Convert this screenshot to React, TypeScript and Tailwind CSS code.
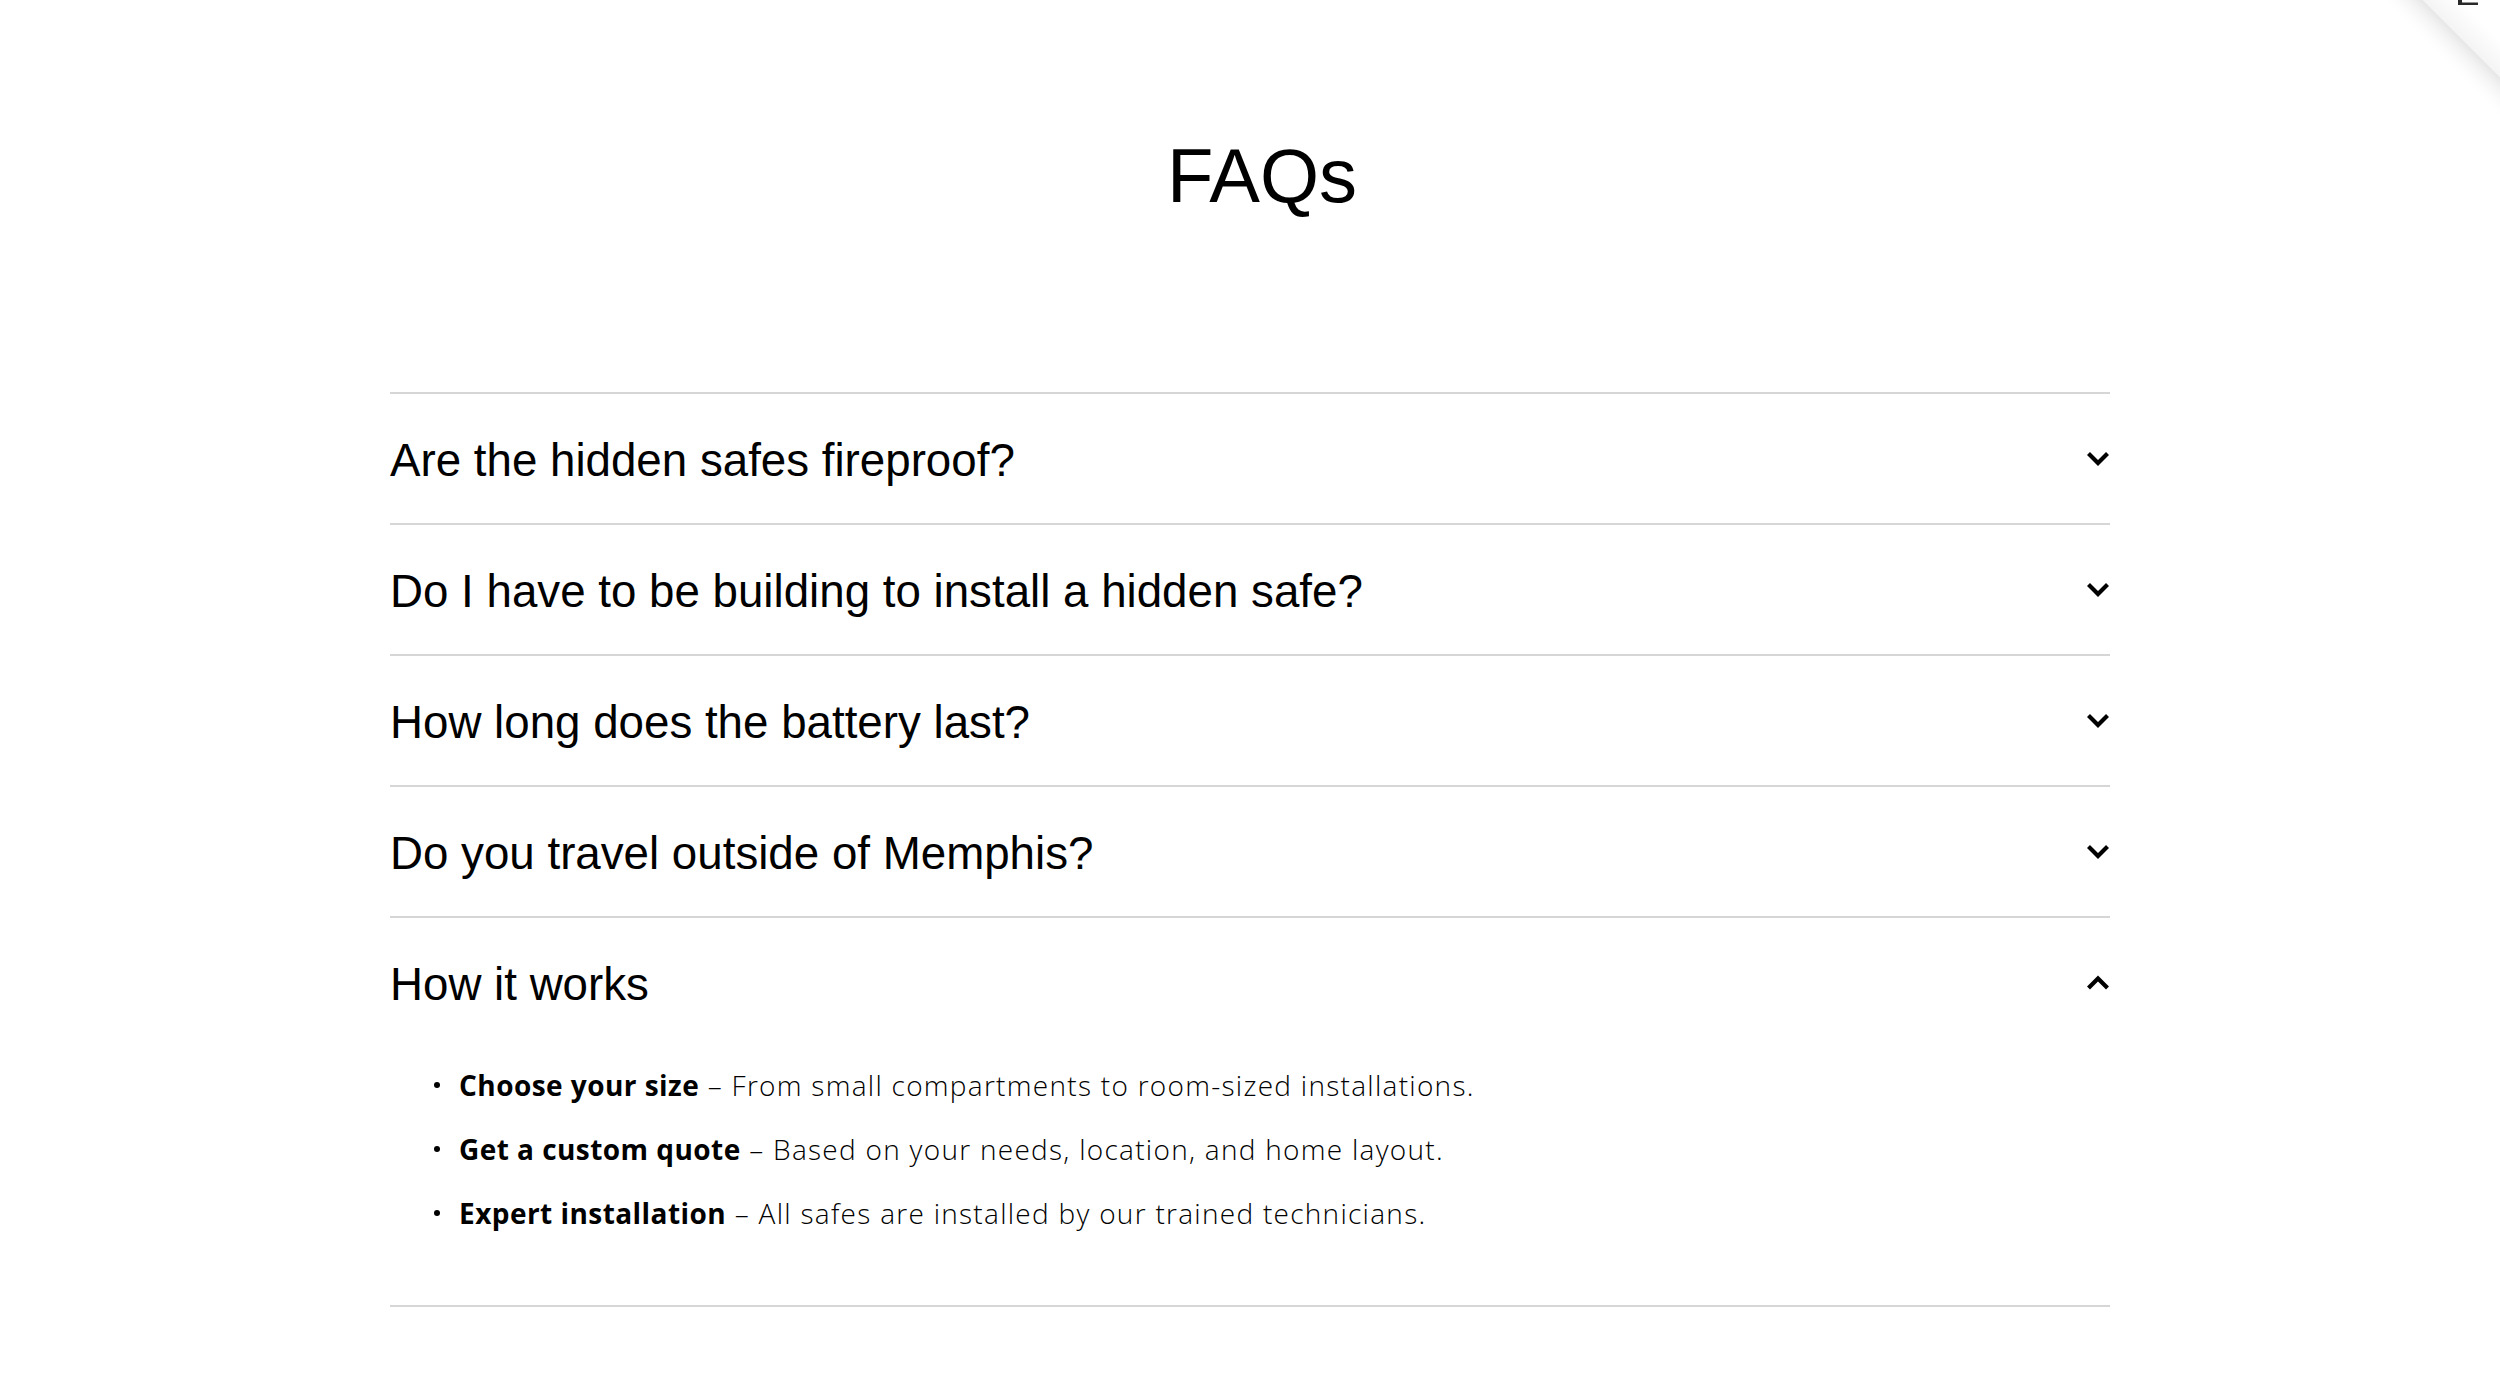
import React from "react";

const questions = [
  "Are the hidden safes fireproof?",
  "Do I have to be building to install a hidden safe?",
  "How long does the battery last?",
  "Do you travel outside of Memphis?",
];

const steps: [string, string][] = [
  ["Choose your size", "From small compartments to room-sized installations."],
  ["Get a custom quote", "Based on your needs, location, and home layout."],
  ["Expert installation", "All safes are installed by our trained technicians."],
];

function Chevron({ up }: { up?: boolean }) {
  return (
    <svg width="24" height="16" viewBox="0 0 24 16" className="overflow-visible shrink-0 mb-[4px]" aria-hidden>
      <polyline
        points={up ? "2.5,13 12,3.5 21.5,13" : "2.5,2.5 12,12 21.5,2.5"}
        fill="none"
        stroke="#000"
        strokeWidth="4.2"
        strokeLinecap="butt"
        strokeLinejoin="miter"
      />
    </svg>
  );
}

function Corner() {
  return (
    <svg width="120" height="120" viewBox="0 0 120 120" className="absolute top-0 right-0" aria-hidden>
      <defs>
        <linearGradient id="shade" gradientUnits="userSpaceOnUse" x1="81.5" y1="38.5" x2="60" y2="60">
          <stop offset="0" stopColor="#e6e6e6" stopOpacity="1" />
          <stop offset="1" stopColor="#ffffff" stopOpacity="0" />
        </linearGradient>
        <linearGradient id="flap" gradientUnits="userSpaceOnUse" x1="81.5" y1="38.5" x2="100" y2="20">
          <stop offset="0" stopColor="#f4f4f4" />
          <stop offset="1" stopColor="#ffffff" />
        </linearGradient>
      </defs>
      <polygon points="43,0 120,77 120,120 0,120 0,0" fill="url(#shade)" />
      <polygon points="43,0 120,0 120,77" fill="url(#flap)" />
      <rect x="78" y="0" width="20" height="5" fill="#2a2a2a" />
      <rect x="82" y="0" width="16" height="2.5" fill="#ffffff" />
    </svg>
  );
}

export default function App() {
  return (
    <div className="relative min-h-screen bg-white overflow-hidden">
      <Corner />
      <div className="w-[1720px] mx-auto pt-[138px] pb-[80px]">
        <h2
          className="text-center pl-[24px] text-[76px] leading-none text-black font-normal"
          style={{ fontFamily: '"Liberation Sans", Arial, sans-serif' }}
        >
          FAQs
        </h2>
        <div className="mt-[178px]" style={{ fontFamily: '"Liberation Sans", Arial, sans-serif' }}>
          {questions.map((q) => (
            <div key={q} className="border-t-2 border-[#d6d6d6]">
              <button className="w-full flex items-center justify-between pt-[44px] pb-[39px] text-left">
                <span className="text-[45.7px] leading-[46px] text-black">{q}</span>
                <Chevron />
              </button>
            </div>
          ))}
          <div className="border-t-2 border-b-2 border-[#d6d6d6]">
            <button className="w-full flex items-center justify-between pt-[44px] pb-[45px] text-left">
              <span className="text-[45.7px] leading-[46px] text-black">How it works</span>
              <Chevron up />
            </button>
            <ul
              className="pb-[60px] text-[28px] leading-[64px] text-black tracking-[1.28px]"
              style={{ fontFamily: '"Open Sans", "Noto Sans", sans-serif' }}
            >
              {steps.map(([b, t]) => (
                <li key={b} className="flex items-center">
                  <span className="ml-[44px] mr-[19px] w-[6px] h-[6px] rounded-full bg-black shrink-0" />
                  <span className="font-light">
                    <strong className="font-bold tracking-[0.45px]">{b}</strong> – {t}
                  </span>
                </li>
              ))}
            </ul>
          </div>
        </div>
      </div>
    </div>
  );
}
